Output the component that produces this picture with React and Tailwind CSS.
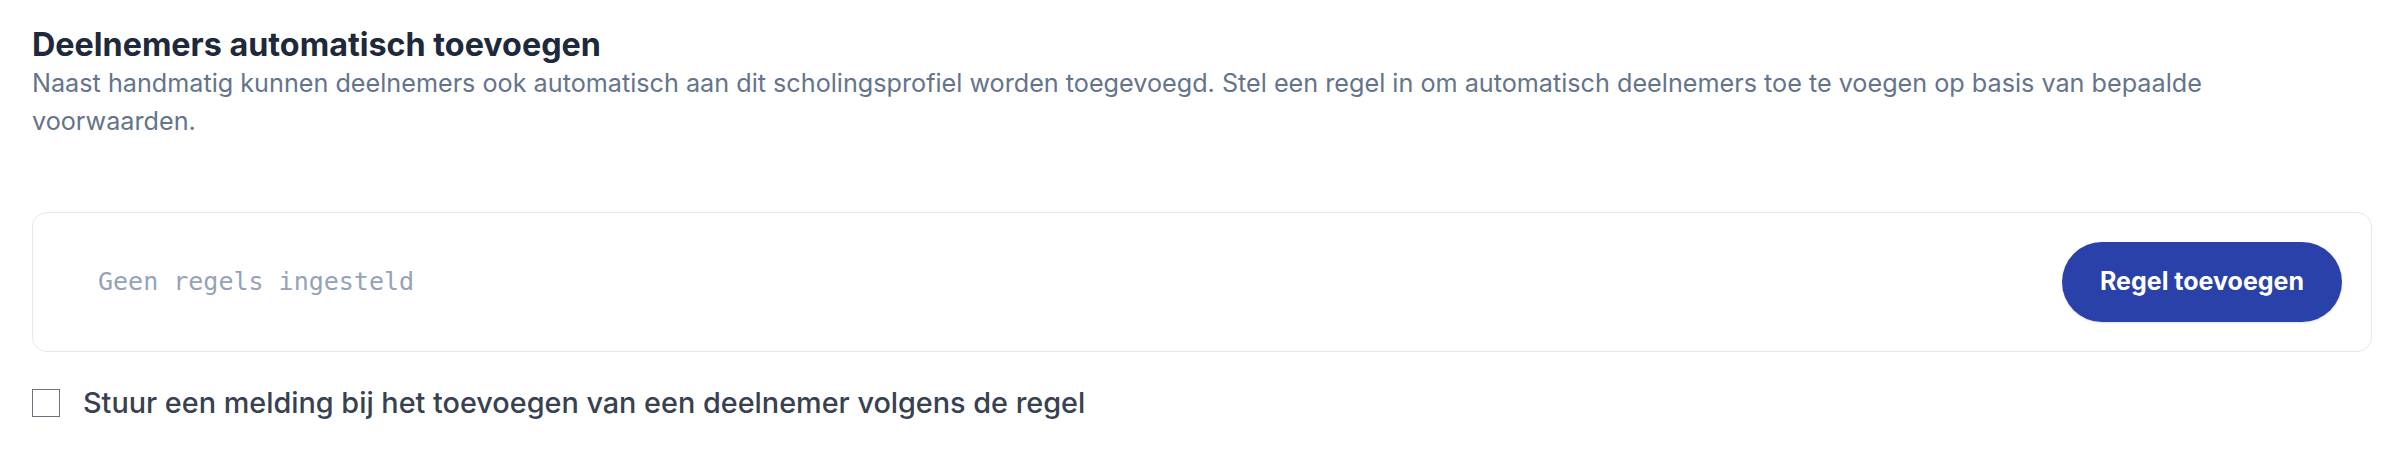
export default function App() {
  return (
    <div className="w-full bg-white px-8 pt-[26px] pb-8 font-['Inter','Liberation_Sans',sans-serif]">
      <h2 className="text-[32.3px] leading-[37px] font-bold text-[#1e293b]">Deelnemers automatisch toevoegen</h2>
      <p className="mt-[1px] max-w-[2280px] text-[25.2px] leading-[38px] text-[#64748b]">
        Naast handmatig kunnen deelnemers ook automatisch aan dit scholingsprofiel worden toegevoegd. Stel een regel in om automatisch deelnemers toe te voegen op basis van bepaalde voorwaarden.
      </p>

      <div className="mt-[72px] flex items-center justify-between rounded-[15px] border border-[#e5e7eb] p-[29px]">
        <span className="pl-9 text-[25px] text-[#94a3b8] font-['DejaVu_Sans_Mono','Liberation_Mono',monospace]">Geen regels ingesteld</span>
        <button className="h-20 w-[280px] rounded-full bg-[#2941a8] text-[25px] font-bold text-white shadow-sm">Regel toevoegen</button>
      </div>

      <label className="mt-[33px] flex items-center gap-[23px]">
        <span className="h-7 w-7 shrink-0 border-[1.5px] border-[#6b7280] bg-white" />
        <span className="text-[28.8px] leading-[36px] font-medium text-[#374151]">Stuur een melding bij het toevoegen van een deelnemer volgens de regel</span>
      </label>
    </div>
  );
}
